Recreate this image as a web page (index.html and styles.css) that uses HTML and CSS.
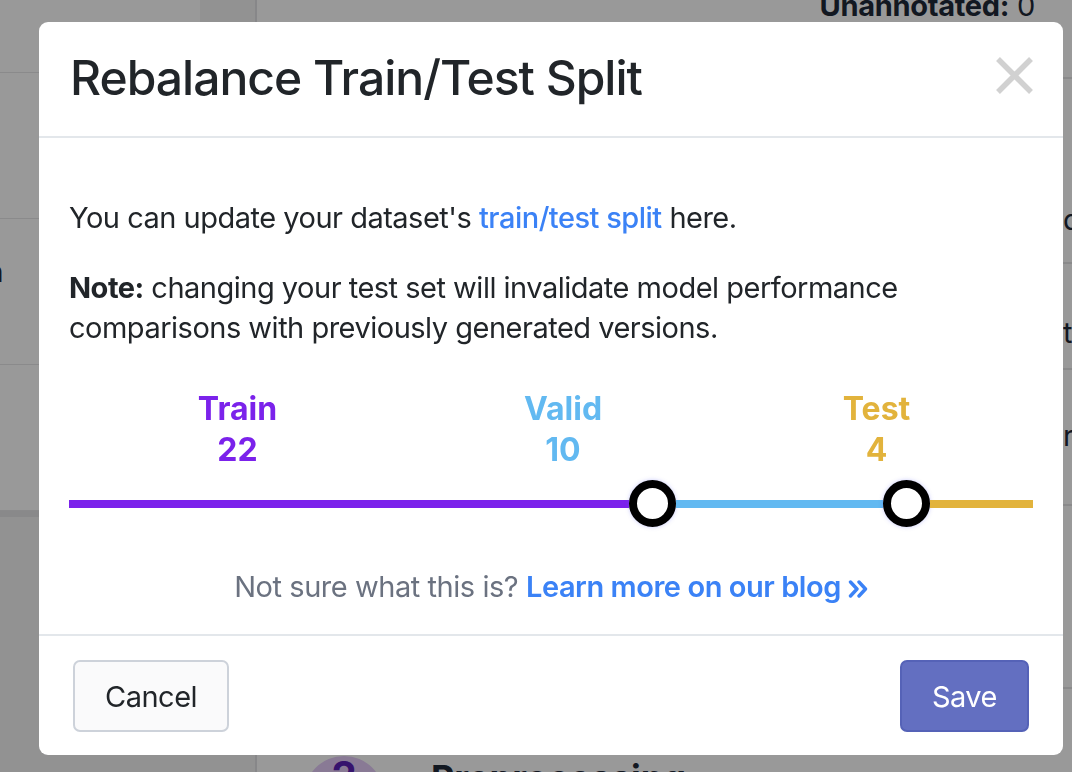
FILE: index.html
```html
<!DOCTYPE html>
<html lang="en">
<head>
<meta charset="utf-8">
<title>Rebalance Train/Test Split</title>
<link rel="stylesheet" href="styles.css">
</head>
<body>
<div class="page">
  <aside class="sidebar">
    <div class="side-item side-first"></div>
    <div class="side-item"></div>
    <div class="side-item"><div class="side-text"><span>Generation</span></div></div>
    <div class="side-item"></div>
    <div class="side-strip"></div>
    <div class="side-rest"></div>
  </aside>
  <div class="rail"></div>
  <main class="main">
    <div class="topbar"><span class="stat"><b>Unannotated:</b> 0</span></div>
    <div class="body-area">
      <div class="steps">
        <div class="step">
          <span class="step-num">2</span>
          <span class="step-title">Preprocessing</span>
        </div>
      </div>
      <div class="peek">
        <div class="peek-row r1"></div>
        <div class="peek-row r2"><span>dataset</span></div>
        <div class="peek-row r3"><span>test</span></div>
        <div class="peek-row r4"><span>rows</span></div>
        <div class="peek-row r5"></div>
      </div>
    </div>
  </main>
</div>

<div class="backdrop"></div>

<div class="modal-layer">
  <div class="modal">
    <div class="modal-header">
      <h1 class="modal-title">Rebalance Train/Test Split</h1>
      <button class="close" aria-label="Close">
        <svg width="37" height="37" viewBox="0 0 37 37"><path d="M2 2 L35 35 M35 2 L2 35" stroke="#d1d1d1" stroke-width="5.5" fill="none"/></svg>
      </button>
    </div>
    <div class="modal-body">
      <p class="para">You can update your dataset's <a class="link" href="#">train/test split</a> here.</p>
      <p class="para"><b>Note:</b> changing your test set will invalidate model performance comparisons with previously generated versions.</p>
      <div class="labels">
        <div class="label train">Train<br>22</div>
        <div class="label valid">Valid<br>10</div>
        <div class="label test">Test<br>4</div>
      </div>
      <div class="slider">
        <div class="seg seg-train"></div>
        <div class="handle"></div>
        <div class="seg seg-valid"></div>
        <div class="handle"></div>
        <div class="seg seg-test"></div>
      </div>
      <p class="help">Not sure what this is? <a class="link-strong" href="#">Learn more on our blog <svg class="chev" width="20" height="18" viewBox="0 0 20 18"><path d="M2.5 2 L9 9 L2.5 16 M11 2 L17.5 9 L11 16" stroke="#3b82f6" stroke-width="3.4" fill="none" stroke-linecap="round" stroke-linejoin="round"/></svg></a></p>
    </div>
    <div class="modal-footer">
      <button class="btn btn-cancel">Cancel</button>
      <button class="btn btn-save">Save</button>
    </div>
  </div>
</div>
</body>
</html>
```
FILE: styles.css
```css
html, body {
  margin: 0;
  padding: 0;
}
body {
  width: 1072px;
  height: 772px;
  overflow: hidden;
  position: relative;
  font-family: Inter, "Noto Sans", "Liberation Sans", sans-serif;
  color: #212529;
}

/* underlying page */
.page {
  display: flex;
  height: 772px;
  background: #ffffff;
}
.sidebar {
  width: 200px;
  flex: none;
  display: flex;
  flex-direction: column;
  background: #ffffff;
}
.side-item {
  box-sizing: border-box;
  height: 146px;
  border-bottom: 1px solid #e6e6e8;
  flex: none;
}
.side-first {
  height: 73px;
}
.side-text {
  width: 3px;
  display: flex;
  justify-content: flex-end;
  white-space: nowrap;
  padding-top: 33px;
  font-size: 29px;
  line-height: 40px;
  color: #1f2937;
  font-weight: 500;
  letter-spacing: -0.5px;
}
.side-strip {
  height: 6px;
  background: #e5e5e7;
  flex: none;
}
.side-rest {
  flex: 1;
  background: #f3f3f4;
}
.rail {
  width: 55px;
  flex: none;
  background: #f3f3f4;
  border-right: 2px solid #e2e2e5;
}
.main {
  flex: 1;
  display: flex;
  flex-direction: column;
  min-width: 0;
}
.topbar {
  margin-top: -14px;
  height: 40px;
  line-height: 40px;
  padding-right: 37px;
  text-align: right;
  font-size: 29px;
  color: #1f2937;
  white-space: nowrap;
  letter-spacing: -0.3px;
}
.stat b {
  font-weight: 700;
}
.body-area {
  flex: 1;
  display: flex;
}
.steps {
  flex: 1;
  padding-left: 47px;
  padding-top: 730px;
}
.step {
  display: flex;
  align-items: flex-start;
  gap: 47px;
}
.step-num {
  width: 80px;
  height: 80px;
  border-radius: 50%;
  background: #e4cbf9;
  color: #5b21b6;
  font-weight: 700;
  font-size: 40px;
  text-align: center;
  line-height: 40px;
}
.step-title {
  font-size: 36px;
  font-weight: 700;
  color: #1f2937;
  line-height: 40px;
  padding-top: 2px;
}
.peek {
  width: 9px;
  flex: none;
  white-space: nowrap;
  font-size: 29px;
  color: #1f2937;
}
.peek-row {
  box-sizing: border-box;
  border-bottom: 2px solid #e6e6e8;
}
.peek-row span {
  display: block;
  line-height: 40px;
}
.r1 { height: 53px; }
.r2 { height: 185px; padding-top: 121px; }
.r3 { height: 106px; padding-top: 49px; }
.r4 { height: 136px; padding-top: 46px; }
.r5 { height: 183px; }

/* overlay */
.backdrop {
  position: fixed;
  inset: 0;
  background: rgba(0, 0, 0, 0.4);
}
.modal-layer {
  position: fixed;
  inset: 0;
  padding: 22px 0 0 39px;
}
.modal {
  box-sizing: border-box;
  width: 1024px;
  height: 733px;
  background: #ffffff;
  border-radius: 9px;
  display: flex;
  flex-direction: column;
  overflow: hidden;
}
.modal-header {
  box-sizing: border-box;
  height: 116px;
  flex: none;
  border-bottom: 2px solid #e3e7eb;
  display: flex;
  justify-content: space-between;
  align-items: flex-start;
  padding: 27px 30px 0 31px;
}
.modal-title {
  margin: 0;
  font-size: 48px;
  font-weight: 500;
  line-height: 1.2;
  letter-spacing: -1px;
  color: #212529;
}
.close {
  border: 0;
  background: none;
  padding: 0;
  margin-top: 8px;
  width: 37px;
  height: 37px;
  display: block;
}
.close svg {
  display: block;
}
.modal-body {
  flex: 1;
  padding: 60px 30px 0 30px;
}
.para {
  margin: 0 0 30px 0;
  font-size: 29px;
  line-height: 40px;
  letter-spacing: -0.5px;
  color: #212529;
}
.para b {
  font-weight: 700;
}
.link {
  color: #3b82f6;
  text-decoration: none;
  font-weight: 500;
}
.labels {
  margin-top: 40px;
  display: grid;
  grid-template-columns: 337px 314px 1fr;
  font-size: 32px;
  font-weight: 700;
  line-height: 41px;
  text-align: center;
}
.train { color: #7b22eb; }
.valid { color: #62b9f1; }
.test { color: #e2b33c; }
.slider {
  margin-top: 10px;
  height: 47px;
  display: flex;
  align-items: center;
}
.seg {
  height: 8px;
}
.seg-train { width: 560px; background: #7b22eb; }
.seg-valid { width: 207px; background: #62b9f1; }
.seg-test { flex: 1; background: #e2b33c; }
.handle {
  box-sizing: border-box;
  width: 47px;
  height: 47px;
  border-radius: 50%;
  border: 8px solid #000000;
  background: #ffffff;
  box-shadow: 0 0 4px rgba(99, 102, 241, 0.35);
  flex: none;
}
.help {
  margin: 40px 0 0 0;
  text-align: center;
  font-size: 29px;
  line-height: 40px;
  letter-spacing: -0.45px;
  color: #6b7280;
}
.link-strong {
  color: #3b82f6;
  font-weight: 600;
  text-decoration: none;
}
.chev {
  vertical-align: -1px;
}
.modal-footer {
  box-sizing: border-box;
  height: 121px;
  flex: none;
  border-top: 2px solid #e3e7eb;
  display: flex;
  justify-content: space-between;
  align-items: flex-start;
  padding: 24px 34px 0 34px;
}
.btn {
  box-sizing: border-box;
  height: 72px;
  border-radius: 7px;
  font-family: inherit;
  font-size: 29px;
  letter-spacing: -0.5px;
  padding: 0 30px;
  line-height: 1;
}
.btn-cancel {
  background: #fafafb;
  border: 2px solid #cdd2da;
  color: #212529;
}
.btn-save {
  background: #636fc1;
  border: 2px solid #5562b7;
  color: #ffffff;
}
```
